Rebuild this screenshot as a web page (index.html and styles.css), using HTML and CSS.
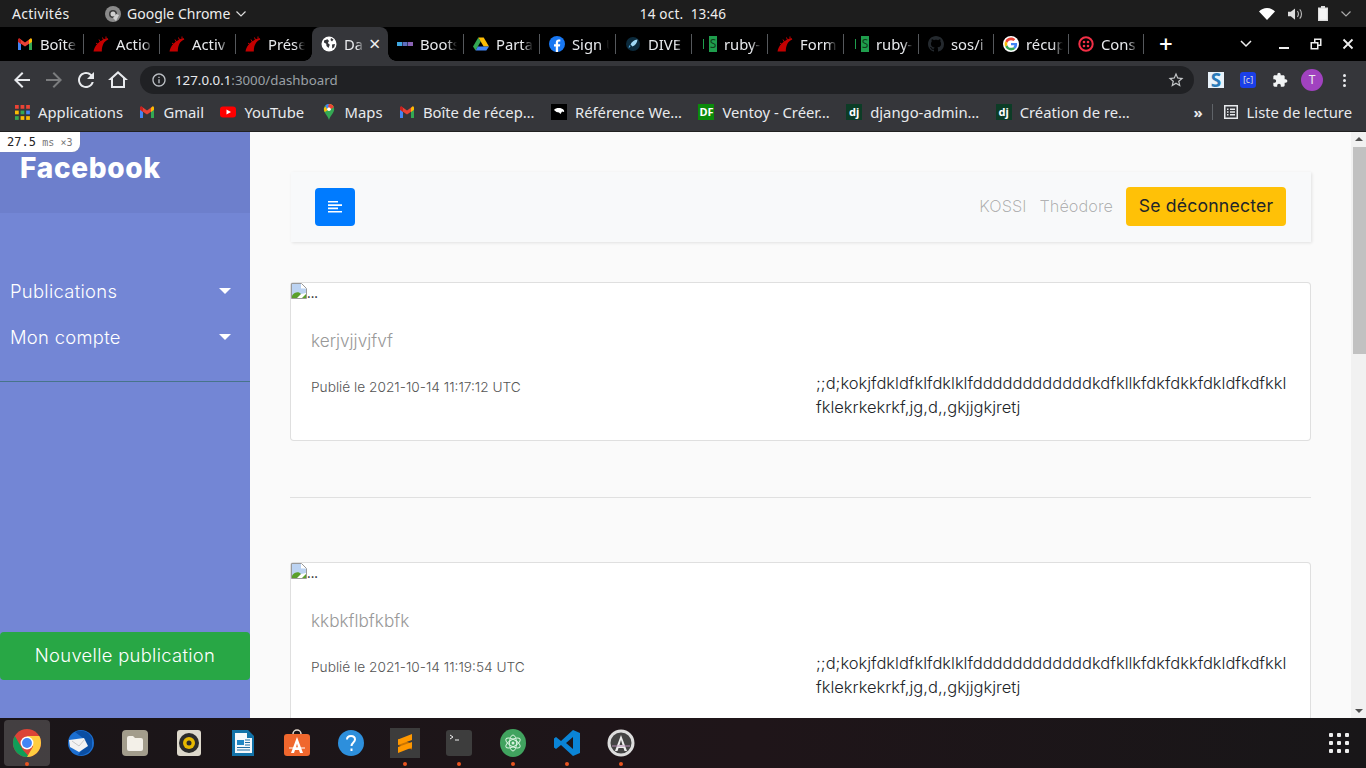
FILE: index.html
```html
<!DOCTYPE html>
<html lang="fr">
<head>
    <meta charset="UTF-8">
    <title>Dashboard</title>
    <link rel="stylesheet" href="styles.css">
</head>
<body>
    <svg class="defs" width="0" height="0">
        <symbol id="i-gmail" viewBox="0 0 16 16">
            <path fill="#4285f4" d="M1 4.200V14h3V7z"/>
            <path fill="#34a853" d="M15 4.200V14h-3V7z"/>
            <path fill="#ea4335" d="M1 4.200 2.500 2.400 8 6.600l5.500-4.200L15 4.200v1.600L8 10.600 1 5.800z"/>
            <path fill="#fbbc04" d="M12 4.100 13.500 2.400C14.600 2.200 15 3 15 4.200v1.600l-3 2.200z"/>
            <path fill="#c5221f" d="M1 4.200C1 3 1.400 2.200 2.500 2.400L4 3.600V8L1 5.800z"/>
        </symbol>
        <symbol id="i-rails" viewBox="0 0 16 16">
            <path fill="#c30000" d="M.5 15.500C1.500 10 5.500 4.500 14.500 2l.8 1.500C11 5 8.800 9.500 8.800 15.500z"/>
            <path fill="none" stroke="#c30000" stroke-width="1" d="M3 7 5 8.500M6 3.500l1.500 2.500M9.500 1.500 10.500 4M13 .5V2.500"/>
        </symbol>
        <symbol id="i-globe" viewBox="0 0 16 16">
            <circle cx="8" cy="8" r="7.500" fill="#fff"/>
            <path fill="#35363a" d="M3 4.500 6.500 3.200 8 5 6.800 7 8.800 8.800 7.500 12 5.500 10 5.200 7.800 3 6.500zM10 2l2.500 1.500L11 5.500 9.500 4zM11 8.500l3-.5-.8 3.200-2 1.300z"/>
        </symbol>
        <symbol id="i-mdb" viewBox="0 0 16 16">
            <rect x="0" y="6" width="5" height="4" fill="#3fa7e0"/>
            <rect x="5.500" y="6" width="5" height="4" fill="#5d6fc0"/>
            <rect x="11" y="6" width="5" height="4" fill="#8a63b5"/>
        </symbol>
        <symbol id="i-drive" viewBox="0 0 16 16">
            <path fill="#34a853" d="M5.300 1.500 0 10.600l2.600 4 5.100-9z"/>
            <path fill="#fbbc04" d="M5.300 1.500h5.400l5.300 9.100h-5.300z"/>
            <path fill="#4285f4" d="M4.800 10.600H16l-2.700 4H2.600z"/>
        </symbol>
        <symbol id="i-fb" viewBox="0 0 16 16">
            <circle cx="8" cy="8" r="8" fill="#1877f2"/>
            <path fill="#fff" d="M6.800 16v-5.600H5V8.200h1.800V6.500C6.800 4.500 8 3.500 9.700 3.500l1.600.1v1.900h-1c-.9 0-1.200.5-1.200 1.200v1.500h2.100l-.3 2.200H9.100V16z"/>
        </symbol>
        <symbol id="i-dive" viewBox="0 0 16 16">
            <circle cx="8" cy="8" r="7" fill="#0b2a3c"/>
            <path fill="#9fd8f5" d="M12.500 3.500C9 3.800 6.500 6 5.500 8.500l2 2c2.500-1 4.700-3.500 5-7z"/>
            <path fill="#4fa3d8" d="M5.500 10.500 3.500 12.500 4 10l1-1z"/>
        </symbol>
        <symbol id="i-github" viewBox="0 0 16 16">
            <path fill="#24292e" d="M8 0C3.580 0 0 3.580 0 8c0 3.540 2.290 6.530 5.470 7.590.4.07.55-.17.55-.38 0-.19-.01-.82-.01-1.490-2.010.37-2.530-.49-2.690-.94-.09-.23-.48-.94-.82-1.130-.28-.15-.68-.52-.01-.53.63-.01 1.080.58 1.230.82.72 1.210 1.870.87 2.330.66.07-.52.28-.87.51-1.070-1.780-.2-3.640-.89-3.640-3.950 0-.87.31-1.590.82-2.150-.08-.2-.36-1.020.08-2.120 0 0 .67-.21 2.200.82.64-.18 1.320-.27 2-.27.68 0 1.360.09 2 .27 1.530-1.040 2.200-.82 2.200-.82.44 1.100.16 1.920.08 2.120.51.56.82 1.270.82 2.150 0 3.070-1.870 3.750-3.650 3.950.29.25.54.73.54 1.480 0 1.070-.01 1.930-.01 2.200 0 .21.15.46.55.38A8.013 8.013 0 0016 8c0-4.420-3.580-8-8-8z"/>
        </symbol>
        <symbol id="i-google" viewBox="-6 -6 60 60">
            <circle cx="24" cy="24" r="30" fill="#fff"/>
            <path fill="#ea4335" d="M24 9.500c3.540 0 6.710 1.220 9.210 3.600l6.850-6.850C35.900 2.380 30.470 0 24 0 14.620 0 6.510 5.380 2.560 13.220l7.980 6.190C12.430 13.720 17.740 9.500 24 9.500z"/>
            <path fill="#4285f4" d="M46.980 24.550c0-1.570-.15-3.090-.38-4.550H24v9.020h12.940c-.58 2.960-2.260 5.480-4.780 7.180l7.730 6c4.510-4.180 7.090-10.360 7.090-17.65z"/>
            <path fill="#fbbc05" d="M10.530 28.590c-.48-1.450-.76-2.990-.76-4.590s.27-3.140.76-4.590l-7.980-6.190C.92 16.460 0 20.120 0 24c0 3.880.92 7.540 2.560 10.780l7.970-6.190z"/>
            <path fill="#34a853" d="M24 48c6.480 0 11.930-2.130 15.890-5.810l-7.730-6c-2.150 1.450-4.920 2.300-8.160 2.300-6.260 0-11.570-4.220-13.470-9.910l-7.980 6.190C6.510 42.620 14.620 48 24 48z"/>
        </symbol>
        <symbol id="i-twilio" viewBox="0 0 16 16">
            <circle cx="8" cy="8" r="6.700" fill="none" stroke="#f22f46" stroke-width="2"/>
            <circle cx="6" cy="6" r="1.300" fill="#f22f46"/>
            <circle cx="10" cy="6" r="1.300" fill="#f22f46"/>
            <circle cx="6" cy="10" r="1.300" fill="#f22f46"/>
            <circle cx="10" cy="10" r="1.300" fill="#f22f46"/>
        </symbol>
        <symbol id="i-chrome" viewBox="0 0 48 48">
            <circle cx="24" cy="24" r="24" fill="#db4437"/>
            <path fill="#0f9d58" d="M24 48C10.700 48 0 37.300 0 24c0-4.400 1.200-8.500 3.200-12l13.900 24 10.500 11.700c-1.200.2-2.400.3-3.600.3z"/>
            <path fill="#ffcd40" d="M24 12h21c2 3.500 3 7.700 3 12 0 13.300-10.700 24-24 24l10.400-18z"/>
            <circle cx="24" cy="24" r="11" fill="#fff"/>
            <circle cx="24" cy="24" r="8.500" fill="#4285f4"/>
        </symbol>
        <symbol id="i-broken" viewBox="0 0 16 16">
            <path d="M.5.5h10l5 5v10H.5z" fill="#fff" stroke="#9a9a9a"/>
            <path d="M1 1h9v4.500h5V10L1 13z" fill="#bcd3f2"/>
            <path d="M1 15v-2.500C4 8.500 8 8.500 10 11l-4 4z" fill="#5aa02c"/>
            <path d="M11 15l4-4v4z" fill="#5aa02c"/>
        </symbol>
    </svg>

    <div class="topbar">
        <div class="topbar-left">
            <span class="activities">Activités</span>
            <span class="app-menu">
                <svg class="app-icon" viewBox="0 0 16 16"><circle cx="8" cy="8" r="8" fill="#8a8a8a"/><circle cx="8" cy="8" r="4" fill="#3a3a3a"/><circle cx="8" cy="8" r="2.500" fill="#cfcfcf"/><path d="M8 12l3-4 3 1-3 6z" fill="#cfcfcf"/></svg>
                Google Chrome
                <svg class="chevron" viewBox="0 0 10 6"><path d="M.5.5 5 5 9.500.5" fill="none" stroke="#ddd" stroke-width="1.200"/></svg>
            </span>
        </div>
        <div class="clock">14 oct.&nbsp;&nbsp;13:46</div>
        <div class="topbar-right">
            <svg class="tray-wifi" viewBox="0 0 16 12"><path d="M0 3.500C2 1.500 5 0 8 0s6 1.500 8 3.500L8 12z" fill="#fff"/></svg>
            <svg class="tray-vol" viewBox="0 0 16 14"><path d="M0 4.500h3L7.500 1v12L3 9.500H0z" fill="#ddd"/><path d="M10 4c1.500 1.500 1.500 4.500 0 6M12.500 2c2.500 2.500 2.500 7.500 0 10" fill="none" stroke="#bbb" stroke-width="1.200"/></svg>
            <svg class="tray-bat" viewBox="0 0 10 15"><path d="M3 0h4v1.500h3V15H0V1.500h3z" fill="#ddd"/><rect x="1.200" y="2.700" width="7.600" height="11" fill="#f5f5f5"/></svg>
            <svg class="chevron" viewBox="0 0 10 6"><path d="M.5.5 5 5 9.500.5" fill="none" stroke="#aaa" stroke-width="1.200"/></svg>
        </div>
    </div>

    <div class="tabstrip">
        <div class="tab"><svg class="tab-icon"><use href="#i-gmail"/></svg><span class="tab-title">Boîte</span></div>
        <div class="tab"><svg class="tab-icon"><use href="#i-rails"/></svg><span class="tab-title">Actio</span></div>
        <div class="tab"><svg class="tab-icon"><use href="#i-rails"/></svg><span class="tab-title">Activ</span></div>
        <div class="tab tab-before-active"><svg class="tab-icon"><use href="#i-rails"/></svg><span class="tab-title">Prése</span></div>
        <div class="tab tab-active"><svg class="tab-icon"><use href="#i-globe"/></svg><span class="tab-title">Da</span><span class="tab-close">×</span></div>
        <div class="tab"><svg class="tab-icon"><use href="#i-mdb"/></svg><span class="tab-title">Boots</span></div>
        <div class="tab"><svg class="tab-icon"><use href="#i-drive"/></svg><span class="tab-title">Parta</span></div>
        <div class="tab"><svg class="tab-icon"><use href="#i-fb"/></svg><span class="tab-title">Sign U</span></div>
        <div class="tab"><svg class="tab-icon"><use href="#i-dive"/></svg><span class="tab-title">DIVE</span></div>
        <div class="tab"><span class="tab-icon rs-icon"><b>S</b></span><span class="tab-title">ruby-</span></div>
        <div class="tab"><svg class="tab-icon"><use href="#i-rails"/></svg><span class="tab-title">Form</span></div>
        <div class="tab tab-narrow"><span class="tab-icon rs-icon"><b>S</b></span><span class="tab-title">ruby-</span></div>
        <div class="tab tab-narrow"><svg class="tab-icon"><use href="#i-github"/></svg><span class="tab-title">sos/i</span></div>
        <div class="tab tab-narrow"><svg class="tab-icon"><use href="#i-google"/></svg><span class="tab-title">récup</span></div>
        <div class="tab tab-narrow"><svg class="tab-icon"><use href="#i-twilio"/></svg><span class="tab-title">Cons</span></div>
        <span class="new-tab">+</span>
        <div class="window-controls">
            <svg class="win-icon win-list" viewBox="0 0 14 14"><path d="M2 4l5 5 5-5" fill="none" stroke="#eee" stroke-width="1.500"/></svg>
            <svg class="win-icon" viewBox="0 0 14 14"><rect x="2" y="10" width="10" height="2" fill="#eee"/></svg>
            <svg class="win-icon" viewBox="0 0 14 14"><path d="M5 1.500h7.500V9H9.500v3.500H1.500V5H5zM6.500 3v2h3v2.500h1.500V3zM3 6.500V11h5V6.500z" fill="#eee"/></svg>
            <svg class="win-icon" viewBox="0 0 14 14"><path d="M2.500 2.500l9 9m0-9-9 9" fill="none" stroke="#eee" stroke-width="1.800"/></svg>
        </div>
    </div>

    <div class="toolbar">
        <svg class="nav-icon" viewBox="0 0 24 24"><path fill="#e8eaed" d="M20 11H7.830l5.590-5.590L12 4l-8 8 8 8 1.410-1.410L7.830 13H20v-2z"/></svg>
        <svg class="nav-icon" viewBox="0 0 24 24"><path fill="#7b7c7e" d="M12 4l-1.410 1.410L16.170 11H4v2h12.170l-5.580 5.590L12 20l8-8z"/></svg>
        <svg class="nav-icon" viewBox="0 0 24 24"><path fill="#e8eaed" d="M17.650 6.350A7.958 7.958 0 0012 4c-4.420 0-7.990 3.580-7.990 8s3.570 8 7.990 8c3.730 0 6.840-2.550 7.730-6h-2.080A5.990 5.990 0 0112 18c-3.310 0-6-2.690-6-6s2.690-6 6-6c1.660 0 3.140.69 4.220 1.780L13 11h7V4l-2.350 2.350z"/></svg>
        <svg class="nav-icon" viewBox="0 0 24 24"><path fill="#e8eaed" d="M12 3L2 12h3v8h14v-8h3L12 3zm0 2.700l5 4.500V18H7v-7.800l5-4.500z"/></svg>
        <div class="omnibox">
            <svg class="omni-info" viewBox="0 0 24 24"><path fill="#bdc1c6" d="M11 7h2v2h-2zm0 4h2v6h-2zm1-9C6.480 2 2 6.480 2 12s4.480 10 10 10 10-4.480 10-10S17.520 2 12 2zm0 18c-4.410 0-8-3.590-8-8s3.590-8 8-8 8 3.590 8 8-3.590 8-8 8z"/></svg>
            <span class="url"><span class="url-host">127.0.0.1</span>:3000/dashboard</span>
            <svg class="omni-star" viewBox="0 0 24 24"><path fill="#c4c7c9" d="M22 9.240l-7.190-.62L12 2 9.190 8.630 2 9.240l5.460 4.730L5.820 21 12 17.270 18.180 21l-1.630-7.030L22 9.240zM12 15.400l-3.760 2.270 1-4.280-3.320-2.880 4.380-.38L12 6.100l1.710 4.040 4.380.38-3.320 2.880 1 4.280L12 15.400z"/></svg>
        </div>
        <div class="extensions">
            <span class="ext ext-s">S</span>
            <span class="ext ext-c">[c]</span>
            <svg class="ext-puzzle" viewBox="0 0 24 24"><path fill="#f1f3f4" d="M20.500 11H19V7c0-1.100-.9-2-2-2h-4V3.500C13 2.120 11.880 1 10.500 1S8 2.120 8 3.500V5H4c-1.100 0-1.990.9-1.990 2v3.800H3.500c1.490 0 2.700 1.210 2.700 2.700s-1.210 2.700-2.700 2.700H2V20c0 1.100.9 2 2 2h3.800v-1.500c0-1.490 1.210-2.700 2.700-2.700 1.490 0 2.700 1.210 2.700 2.700V22H17c1.100 0 2-.9 2-2v-4h1.500c1.380 0 2.500-1.120 2.500-2.500S21.880 11 20.500 11z"/></svg>
            <span class="avatar">T</span>
            <span class="kebab"><i></i><i></i><i></i></span>
        </div>
    </div>

    <div class="bookmarks">
        <span class="bm">
            <svg class="bm-icon bm-apps" viewBox="0 0 14 14">
                <g fill="#ea4335"><rect width="3.500" height="3.500"/><rect x="5.200" width="3.500" height="3.500"/><rect x="10.400" width="3.500" height="3.500"/></g>
                <g fill="#fbbc04"><rect y="5.200" width="3.500" height="3.500"/><rect x="10.400" y="10.400" width="3.500" height="3.500"/><rect x="5.200" y="10.400" width="3.500" height="3.500"/></g>
                <g fill="#34a853"><rect x="5.200" y="5.200" width="3.500" height="3.500"/><rect y="10.400" width="3.500" height="3.500"/></g>
                <g fill="#4285f4"><rect x="10.400" y="5.200" width="3.500" height="3.500"/></g>
            </svg>Applications</span>
        <span class="bm"><svg class="bm-icon"><use href="#i-gmail"/></svg>Gmail</span>
        <span class="bm"><svg class="bm-icon" viewBox="0 0 16 16"><rect y="2.500" width="16" height="11" rx="3" fill="#f00"/><path d="M6.500 5.500v5L11 8z" fill="#fff"/></svg>YouTube</span>
        <span class="bm"><svg class="bm-icon" viewBox="0 0 16 16"><path d="M8 0C5 0 2.800 2.300 2.800 5.200c0 3.800 3.700 6 5.200 10.800 1.500-4.800 5.200-7 5.200-10.800C13.200 2.300 11 0 8 0z" fill="#34a853"/><path d="M3 4 8 0c2 0 3.800 1 4.500 2.500L3.800 8C3.200 7 2.800 6 3 4z" fill="#fbbc04"/><path d="M4.500 1.200C5.500.4 6.700 0 8 0v3L5.500 5z" fill="#4285f4"/><path d="M8 0c2 0 4 1.200 4.800 3.200L10 5 7 2.500z" fill="#ea4335"/><circle cx="8" cy="5.200" r="1.800" fill="#fff"/></svg>Maps</span>
        <span class="bm"><svg class="bm-icon"><use href="#i-gmail"/></svg>Boîte de récep…</span>
        <span class="bm"><span class="bm-icon mdn-icon"><svg viewBox="0 0 16 16"><path d="M3 6c1.500-2 5-2.500 7.500-1.500S13.500 7 13 8l-2-.5L9.500 10 8 8.500 5.500 8z" fill="#fff"/></svg></span>Référence We…</span>
        <span class="bm"><span class="bm-icon df-icon">DF</span>Ventoy - Créer…</span>
        <span class="bm"><span class="bm-icon dj-icon">dj</span>django-admin…</span>
        <span class="bm"><span class="bm-icon dj-icon">dj</span>Création de re…</span>
        <div class="bm-end">
            <span class="bm-more">»</span>
            <span class="bm-sep"></span>
            <span class="bm bm-list"><svg class="bm-icon" viewBox="0 0 14 14"><path fill="#e8eaed" d="M0 0h14v14H0zM1.500 1.500v11h11v-11zM3 3.500h1.500V5H3zM6 3.500h5V5H6zM3 6.300h1.500v1.500H3zM6 6.300h5v1.500H6zM3 9h1.500v1.500H3zM6 9h5v1.500H6z" fill-rule="evenodd"/></svg>Liste de lecture</span>
        </div>
    </div>

    <div class="page">
        <div class="profiler">27.5 <small>ms</small> <small>×3</small></div>

        <nav class="sidebar">
            <div class="sidebar-header"><h3>Facebook</h3></div>
            <ul class="side-menu">
                <li>Publications<span class="caret"></span></li>
                <li>Mon compte<span class="caret"></span></li>
            </ul>
            <a class="btn-new">Nouvelle publication</a>
        </nav>

        <main class="content">
            <div class="navbar">
                <span class="btn-toggle">
                    <svg viewBox="0 0 14 14" width="14" height="14"><path fill="#fff" d="M0 1h10v1.600H0zM0 4.300h14v1.600H0zM0 7.600h10v1.600H0zM0 11h14v1.600H0z"/></svg>
                </span>
                <div class="nav-right">
                    <span class="nav-name">KOSSI</span>
                    <span class="nav-name">Théodore</span>
                    <a class="btn-logout">Se déconnecter</a>
                </div>
            </div>

            <article class="card">
                <div class="broken-img"><svg width="16" height="16"><use href="#i-broken"/></svg>...</div>
                <div class="card-body">
                    <h5 class="card-title">kerjvjjvjfvf</h5>
                    <div class="card-row">
                        <p class="card-date">Publié le 2021-10-14 11:17:12 UTC</p>
                        <p class="card-text">;;d;kokjfdkldfklfdklklfddddddddddddkdfkllkfdkfdkkfdkldfkdfkkl<br>fklekrkekrkf,jg,d,,gkjjgkjretj</p>
                    </div>
                </div>
            </article>

            <hr class="divider">

            <article class="card">
                <div class="broken-img"><svg width="16" height="16"><use href="#i-broken"/></svg>...</div>
                <div class="card-body">
                    <h5 class="card-title">kkbkflbfkbfk</h5>
                    <div class="card-row">
                        <p class="card-date">Publié le 2021-10-14 11:19:54 UTC</p>
                        <p class="card-text">;;d;kokjfdkldfklfdklklfddddddddddddkdfkllkfdkfdkkfdkldfkdfkkl<br>fklekrkekrkf,jg,d,,gkjjgkjretj</p>
                    </div>
                </div>
            </article>
        </main>

        <div class="scrollbar">
            <span class="arrow-up"></span>
            <div class="scroll-track"><div class="scroll-thumb"></div></div>
            <span class="arrow-down"></span>
        </div>
    </div>

    <div class="dock">
        <span class="dock-item dock-active"><svg class="dock-icon"><use href="#i-chrome"/></svg><i class="dot"></i></span>
        <span class="dock-item"><svg class="dock-icon" viewBox="0 0 28 28"><circle cx="14" cy="14" r="13" fill="#1c6fd1"/><path d="M8 3c6-3 14-1 17 6v9c-2 6-9 9-14 8l8-10-3-7z" fill="#0a4ea3"/><path d="M2 11l15-2 4 8-9 6-9-5z" fill="#f2f2f2"/><path d="M5 12l7 5 6-7" fill="none" stroke="#c8c8c8"/></svg></span>
        <span class="dock-item"><svg class="dock-icon" viewBox="0 0 28 28"><rect x="1" y="1" width="26" height="26" rx="4" fill="#a39d8c"/><path d="M6 9a2 2 0 012-2h4l2 2h6a2 2 0 012 2v9a2 2 0 01-2 2H8a2 2 0 01-2-2z" fill="#f3f0e8"/></svg></span>
        <span class="dock-item"><svg class="dock-icon" viewBox="0 0 28 28"><rect x="2" y="1" width="24" height="26" rx="3" fill="#ddd8cb"/><circle cx="14" cy="14" r="10" fill="#2b2b2b"/><circle cx="14" cy="14" r="6" fill="#e6b800"/><circle cx="14" cy="14" r="2.500" fill="#2b2b2b"/></svg></span>
        <span class="dock-item"><svg class="dock-icon" viewBox="0 0 28 28"><path d="M3 1h16l6 6v20H3z" fill="#1272a8"/><path d="M6 4h12v5h5v15H6z" fill="#f4f8fb"/><path d="M8 11h7v5H8z" fill="#1f86c4"/><path d="M16 11h5M16 13.500h5M16 16h5M8 18.500h13M8 21h13" stroke="#1f6ea3"/></svg></span>
        <span class="dock-item"><svg class="dock-icon" viewBox="0 0 28 28"><path d="M10 5a4 4 0 018 0" fill="none" stroke="#e8dcd0" stroke-width="1.500"/><rect x="1" y="5" width="26" height="22" rx="3" fill="#f0672d"/><path d="M14 8 8 24h3l1-3h4l1 3h3zM13 18.500l1-4 1 4z" fill="#fff"/><path d="M6 19h16" stroke="#fff"/></svg></span>
        <span class="dock-item"><svg class="dock-icon" viewBox="0 0 28 28"><circle cx="14" cy="14" r="13" fill="#2d8fdc"/><path d="M10 10.500C10 8 12 7 14 7s4 1.200 4 3.500c0 3-3.500 3-3.500 6.500M14.500 19.500v2.500" fill="none" stroke="#fff" stroke-width="2"/></svg></span>
        <span class="dock-item dock-sublime"><svg class="dock-icon" viewBox="0 0 28 28"><path d="M7 10v6l14 4.500v-6z" fill="#c97400"/><path d="M7 10.500 21 5v6L7 16zM7 18l14-5v5.500L7 24z" fill="#ff9800"/></svg><i class="dot"></i></span>
        <span class="dock-item"><svg class="dock-icon" viewBox="0 0 28 28"><rect x="1" y="1" width="26" height="26" rx="3" fill="#3d3d3d"/><path d="M5 6l3 2-3 2" fill="none" stroke="#eee"/><path d="M10 11h4" stroke="#eee"/></svg><i class="dot"></i></span>
        <span class="dock-item"><svg class="dock-icon" viewBox="0 0 28 28"><ellipse cx="14" cy="14" rx="13" ry="14" fill="#41a35f"/><g fill="none" stroke="#d8f3df"><ellipse cx="14" cy="14" rx="8" ry="3.500" transform="rotate(30 14 14)"/><ellipse cx="14" cy="14" rx="8" ry="3.500" transform="rotate(-30 14 14)"/><ellipse cx="14" cy="14" rx="3.500" ry="8"/></g><circle cx="14" cy="14" r="1.500" fill="#d8f3df"/></svg><i class="dot"></i></span>
        <span class="dock-item"><svg class="dock-icon" viewBox="0 0 28 28"><path d="M20 1 27 4v20l-7 3-12-11-5 4-2-1.500V9.500L3 8l5 4zM20 8l-7 6 7 6z" fill="#0a84d6" fill-rule="evenodd"/></svg><i class="dot"></i></span>
        <span class="dock-item"><svg class="dock-icon" viewBox="0 0 28 28"><circle cx="14" cy="14" r="12" fill="#444" stroke="#ddd" stroke-width="3"/><path d="M14 6 8 22h2.500l1-3h5l1 3H20zM12.500 16l1.500-5 1.500 5z" fill="#eee"/><path d="M5 17h18" stroke="#b38bb3"/></svg><i class="dot"></i></span>
        <span class="dock-grid"><i></i><i></i><i></i><i></i><i></i><i></i><i></i><i></i><i></i></span>
    </div>
</body>
</html>
```

FILE: styles.css
```css
*{
    margin: 0;
    padding: 0;
    box-sizing: border-box;
}
html,body{
    height: 100%;
}
body{
    display: flex;
    flex-direction: column;
    overflow: hidden;
    background: #000;
    font-family: "Noto Sans", sans-serif;
    color: #e8eaed;
}
ul{
    list-style: none;
}
.defs{
    position: absolute;
}

/* system bar */
.topbar{
    height: 27px;
    flex: none;
    display: grid;
    grid-template-columns: 1fr auto 1fr;
    align-items: center;
    background: #1d1d1d;
    font-size: 14px;
    color: #eee;
}
.topbar-left{
    display: flex;
    align-items: center;
    padding-left: 12px;
}
.activities{
    width: 93px;
    letter-spacing: .3px;
}
.app-menu{
    display: flex;
    align-items: center;
    gap: 6px;
}
.app-icon{
    width: 16px;
    height: 16px;
}
.chevron{
    width: 10px;
    height: 6px;
}
.clock{
    font-size: 13.5px;
    letter-spacing: .2px;
}
.topbar-right{
    display: flex;
    align-items: center;
    justify-content: flex-end;
    padding-right: 15px;
}
.tray-wifi{
    width: 16px;
    height: 12px;
    margin-right: 13px;
}
.tray-vol{
    width: 15px;
    height: 14px;
    margin-right: 15px;
}
.tray-bat{
    width: 10px;
    height: 15px;
    margin-right: 13px;
}

/* tabs */
.tabstrip{
    height: 34px;
    flex: none;
    display: flex;
    align-items: center;
    padding-left: 8px;
    background: #000;
    font-size: 14.8px;
}
.tab{
    width: 76px;
    height: 34px;
    flex: none;
    display: flex;
    align-items: center;
    padding: 0 0 1px 9px;
    position: relative;
}
.tab-narrow{
    width: 75px;
}
.tab::after{
    content: "";
    position: absolute;
    right: 0;
    top: 7px;
    width: 1px;
    height: 20px;
    background: #55585c;
}
.tab-before-active::after{
    display: none;
}
.tab-active{
    background: #35363a;
    border-radius: 8px 8px 0 0;
    z-index: 1;
}
.tab-active::before,
.tab-active::after{
    content: "";
    position: absolute;
    top: auto;
    bottom: 0;
    width: 8px;
    height: 8px;
    background: radial-gradient(circle at 0 0, transparent 7.5px, #35363a 8px);
}
.tab-active::before{
    left: -8px;
}
.tab-active::after{
    right: -8px;
    background: radial-gradient(circle at 100% 0, transparent 7.5px, #35363a 8px);
}
.tab-icon{
    width: 16px;
    height: 16px;
    flex: none;
    margin-right: 7px;
}
.tab-title{
    flex: none;
    white-space: nowrap;
    -webkit-mask-image: linear-gradient(to right, #000 27px, transparent 37px);
    mask-image: linear-gradient(to right, #000 27px, transparent 37px);
}
.tab-active .tab-title{
    width: 19px;
    -webkit-mask-image: linear-gradient(to right, #000 13px, transparent 20px);
    mask-image: linear-gradient(to right, #000 13px, transparent 20px);
}
.tab-close{
    margin-left: 6px;
    font-size: 20px;
    line-height: 1;
    color: #eee;
}
.rs-icon{
    display: flex;
    justify-content: flex-end;
    font-size: 12px;
    line-height: 16px;
    color: #0f3d1c;
    position: relative;
}
.rs-icon b{
    width: 8px;
    text-align: center;
    font-weight: 400;
    background: #1f9e4d;
}
.rs-icon::before{
    content: "";
    position: absolute;
    left: 2px;
    top: 3px;
    width: 1px;
    height: 10px;
    background: #1f9e4d;
}
.new-tab{
    margin-left: 15px;
    font-size: 24px;
    font-weight: 500;
    line-height: 1;
    color: #fff;
}
.window-controls{
    margin-left: auto;
    display: flex;
    align-items: center;
    padding-right: 11px;
    gap: 18px;
}
.win-list{
    margin-right: 6px;
}
.win-icon{
    width: 14px;
    height: 14px;
}

/* address bar */
.toolbar{
    height: 33px;
    flex: none;
    display: flex;
    align-items: flex-end;
    padding: 0 0 0 10px;
    background: #35363a;
}
.nav-icon{
    width: 24px;
    height: 24px;
    margin: 0 8px 2px 0;
}
.omnibox{
    width: 1054px;
    height: 28px;
    margin-left: 2px;
    display: flex;
    align-items: center;
    padding: 0 9px 0 11px;
    border-radius: 14px;
    background: #202124;
    font-size: 13.3px;
    color: #9aa0a6;
}
.omni-info{
    width: 16px;
    height: 16px;
    margin-right: 8px;
}
.url-host{
    color: #e8eaed;
}
.omni-star{
    width: 18px;
    height: 18px;
    margin-left: auto;
}
.extensions{
    flex: 1;
    height: 28px;
    display: flex;
    align-items: center;
    padding-left: 14px;
}
.ext{
    width: 16px;
    height: 16px;
    flex: none;
    margin-right: 16px;
    text-align: center;
    line-height: 16px;
}
.ext-s{
    background: #e8f2fa;
    color: #2b7ab8;
    font-size: 19px;
    font-weight: 700;
}
.ext-c{
    border-radius: 3px;
    background: #1b3fe8;
    color: #ddd;
    font-size: 9px;
}
.ext-puzzle{
    width: 16px;
    height: 16px;
    flex: none;
    margin-right: 13px;
}
.avatar{
    width: 22px;
    height: 22px;
    flex: none;
    margin-right: 20px;
    border-radius: 50%;
    background: #a142c0;
    color: #eee;
    font-size: 12px;
    line-height: 22px;
    text-align: center;
}
.kebab{
    display: flex;
    flex-direction: column;
    gap: 2px;
}
.kebab i{
    width: 3px;
    height: 3px;
    border-radius: 50%;
    background: #e8eaed;
}

/* bookmarks */
.bookmarks{
    height: 38px;
    flex: none;
    display: flex;
    align-items: center;
    gap: 16.4px;
    padding: 0 14px 1px 15px;
    background: #35363a;
    border-bottom: 1px solid #202020;
    font-size: 14.8px;
}
.bm{
    display: flex;
    align-items: center;
    white-space: nowrap;
}
.bm-icon{
    width: 16px;
    height: 16px;
    flex: none;
    margin-right: 8px;
}
.bm-apps{
    width: 15px;
    height: 15px;
}
.mdn-icon{
    background: #000;
}
.mdn-icon svg{
    display: block;
}
.df-icon{
    background: #0a8a0a;
    color: #fff;
    font-size: 11px;
    font-weight: 700;
    line-height: 16px;
    text-align: center;
}
.dj-icon{
    background: #0c3c26;
    color: #fff;
    font-size: 11px;
    font-weight: 700;
    line-height: 15px;
    text-align: center;
}
.bm-end{
    margin-left: auto;
    display: flex;
    align-items: center;
}
.bm-more{
    font-size: 15px;
    font-weight: 700;
    margin-right: 9px;
}
.bm-sep{
    width: 1px;
    height: 16px;
    margin-right: 11px;
    background: #5f6368;
}
.bm-list .bm-icon{
    width: 14px;
    height: 14px;
    margin-right: 9px;
}

/* page */
.page{
    flex: 1;
    min-height: 0;
    display: flex;
    position: relative;
    overflow: hidden;
    background: #fafafa;
    font-family: "Inter", sans-serif;
}
.profiler{
    position: absolute;
    left: 0;
    top: 0;
    width: 80px;
    height: 20px;
    padding-left: 7px;
    border-radius: 0 0 8px 0;
    background: #fff;
    box-shadow: 0 0 1px #888;
    color: #222;
    font-family: "DejaVu Sans Mono", monospace;
    font-size: 12px;
    line-height: 20px;
    white-space: nowrap;
    word-spacing: -1px;
}
.profiler small{
    color: #777;
    font-size: 10px;
}
.sidebar{
    width: 250px;
    flex: none;
    display: flex;
    flex-direction: column;
    background: #7386d5;
    color: #fff;
}
.sidebar-header{
    height: 81px;
    padding: 20px 20px 0;
    background: #6d7fcc;
}
.sidebar-header h3{
    font-size: 28px;
    font-weight: 800;
    line-height: 32px;
    letter-spacing: .7px;
}
.side-menu{
    height: 169px;
    padding-top: 55px;
    border-bottom: 1px solid #47748b;
}
.side-menu li{
    height: 46px;
    display: flex;
    align-items: center;
    justify-content: space-between;
    padding: 0 19px 0 10px;
    font-size: 18.4px;
    font-weight: 300;
    letter-spacing: .3px;
}
.caret{
    border-top: 6px solid #fff;
    border-left: 6px solid transparent;
    border-right: 6px solid transparent;
}
.btn-new{
    height: 48px;
    margin-top: 250px;
    border-radius: 4px;
    background: #28a745;
    color: #fff;
    font-size: 18.4px;
    font-weight: 300;
    letter-spacing: .3px;
    line-height: 47px;
    text-align: center;
}
.content{
    flex: 1;
    min-width: 0;
    padding: 40px;
    color: #212529;
}
.navbar{
    height: 70px;
    margin: 0 0 40px 1px;
    display: flex;
    align-items: center;
    justify-content: space-between;
    padding: 0 25px 0 24px;
    background: #f8f9fa;
    box-shadow: 1px 1px 3px rgba(0,0,0,.1);
}
.btn-toggle{
    width: 40px;
    height: 38px;
    display: flex;
    align-items: center;
    justify-content: center;
    border-radius: 4px;
    background: #007bff;
}
.nav-right{
    display: flex;
    align-items: center;
    gap: 13px;
    margin-bottom: 2px;
    font-size: 16.3px;
}
.nav-name{
    color: rgba(0,0,0,.3);
    font-weight: 300;
}
.btn-logout{
    width: 160px;
    height: 39px;
    border-radius: 4px;
    background: #ffc107;
    font-size: 17.6px;
    font-weight: 400;
    letter-spacing: .2px;
    line-height: 38px;
    text-align: center;
}
.card{
    height: 159px;
    flex: none;
    border: 1px solid rgba(0,0,0,.125);
    border-radius: 4px;
    background: #fff;
}
.broken-img{
    height: 16px;
    display: flex;
    align-items: flex-end;
    color: #212529;
    font-size: 11px;
    font-weight: 700;
    line-height: 9px;
}
.card-body{
    padding: 30px 20px 0;
}
.card-title{
    font-size: 17.2px;
    font-weight: 300;
    line-height: 24px;
    color: #999;
}
.card-row{
    display: flex;
    margin-top: 18px;
}
.card-date{
    width: 505px;
    flex: none;
    padding-top: 5px;
    font-size: 13.7px;
    font-weight: 300;
    line-height: 22px;
    color: #555;
}
.card-text{
    font-size: 16.5px;
    font-weight: 300;
    line-height: 24px;
    white-space: nowrap;
}
.divider{
    height: 1px;
    margin: 56px 0 64px;
    border: 0;
    background: #e0e0e0;
}
.scrollbar{
    width: 15px;
    flex: none;
    display: flex;
    flex-direction: column;
    align-items: center;
    background: #f1f1f1;
}
.arrow-up,.arrow-down{
    height: 4px;
    flex: none;
    border-left: 4px solid transparent;
    border-right: 4px solid transparent;
}
.arrow-up{
    border-bottom: 4px solid #505050;
    margin: 5px 0 6px;
}
.arrow-down{
    border-top: 4px solid #505050;
    margin: 6px 0 5px;
}
.scroll-track{
    flex: 1;
    width: 100%;
}
.scroll-thumb{
    width: 13px;
    height: 207px;
    margin: 0 0 0 2px;
    background: #c1c1c1;
}

/* dock */
.dock{
    height: 50px;
    flex: none;
    display: flex;
    align-items: center;
    background: linear-gradient(to right, #1a1518, #1f1519 55%, #181618);
}
.dock-item{
    width: 54px;
    height: 46px;
    flex: none;
    display: flex;
    align-items: center;
    justify-content: center;
    position: relative;
}
.dock-icon{
    width: 28px;
    height: 28px;
    position: relative;
}
.dock-active::before{
    content: "";
    position: absolute;
    left: 4px;
    right: 4px;
    top: 0;
    bottom: 0;
    border-radius: 4px;
    background: rgba(255,255,255,.18);
}
.dock-sublime::before{
    content: "";
    position: absolute;
    left: 12px;
    right: 12px;
    top: 8px;
    bottom: 8px;
    background: #3c3c3c;
}
.dot{
    position: absolute;
    left: 25px;
    bottom: 0;
    width: 4px;
    height: 4px;
    border-radius: 50%;
    background: #e95420;
}
.dock-grid{
    margin-left: auto;
    margin-right: 17px;
    display: grid;
    grid-template-columns: repeat(3, 4px);
    gap: 4px;
    width: 20px;
}
.dock-grid i{
    width: 4px;
    height: 4px;
    border-radius: 1px;
    background: #eee;
}
```
